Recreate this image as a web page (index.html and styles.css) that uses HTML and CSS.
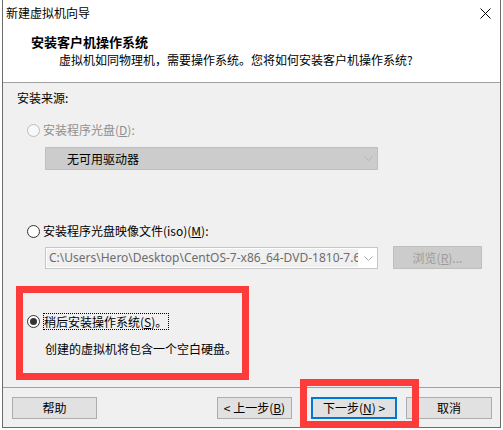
FILE: index.html
```html
<!DOCTYPE html>
<html lang="zh-CN">
<head>
<meta charset="utf-8">
<title>新建虚拟机向导</title>
<link rel="stylesheet" href="styles.css">
</head>
<body>
<div class="window">
  <div class="header">
    <div class="titlebar">
      <span class="title">新建虚拟机向导</span>
      <svg class="close" width="11" height="11" viewBox="0 0 11 11"><path d="M0.5 0.5 L10.5 10.5 M10.5 0.5 L0.5 10.5" stroke="#000" stroke-width="1" fill="none"/></svg>
    </div>
    <div class="heading">安装客户机操作系统</div>
    <div class="subtitle">虚拟机如同物理机，需要操作系统。您将如何安装客户机操作系统?</div>
  </div>
  <div class="content">
    <div class="source">安装来源:</div>
    <div class="radio-row row-disc">
      <span class="radio disabled"></span>
      <span class="label disabled-text">安装程序光盘(<u>D</u>):</span>
    </div>
    <div class="combo combo-disabled">
      <span>无可用驱动器</span>
      <svg class="arrow" width="9" height="5" viewBox="0 0 9 5"><polyline points="0.5,0.5 4.5,4.5 8.5,0.5" stroke="#b4b4b4" fill="none"/></svg>
    </div>
    <div class="radio-row row-iso">
      <span class="radio"></span>
      <span class="label">安装程序光盘映像文件(iso)(<u>M</u>):</span>
    </div>
    <div class="iso-row">
      <div class="combo combo-path">
        <span class="path">C:\Users\Hero\Desktop\CentOS-7-x86_64-DVD-1810-7.6</span>
        <svg class="arrow" width="9" height="5" viewBox="0 0 9 5"><polyline points="0.5,0.5 4.5,4.5 8.5,0.5" stroke="#a8a8a8" fill="none"/></svg>
      </div>
      <div class="btn btn-disabled">浏览(<u>R</u>)...</div>
    </div>
    <div class="radio-row row-later">
      <span class="radio checked"></span>
      <span class="label focus">稍后安装操作系统(<u>S</u>)。</span>
    </div>
    <div class="desc">创建的虚拟机将包含一个空白硬盘。</div>
  </div>
  <div class="footer">
    <div class="btn btn-help">帮助</div>
    <div class="spacer"></div>
    <div class="btn btn-back">&lt; 上一步(<u>B</u>)</div>
    <div class="btn btn-next">下一步(<u>N</u>) &gt;</div>
    <div class="btn btn-cancel">取消</div>
  </div>
  <div class="annot annot-option"></div>
  <div class="annot annot-next"></div>
</div>
</body>
</html>
```
FILE: styles.css
```css
* { box-sizing: border-box; }
html, body { margin: 0; padding: 0; background: #fff; }
body {
  font-family: "Noto Sans CJK SC", "Noto Sans", sans-serif;
  font-size: 12px;
  color: #000;
}
u { text-decoration: underline; text-underline-offset: 1px; }

.window {
  position: relative;
  margin-left: 2px;
  width: 499px;
  height: 428px;
  border-left: 1px solid #6b6b6b;
  border-right: 1px solid #6b6b6b;
  border-bottom: 1px solid #6b6b6b;
  display: flex;
  flex-direction: column;
}

.header {
  background: #fff;
  height: 83px;
  border-bottom: 1px solid #a0a0a0;
}
.titlebar {
  height: 26px;
  display: flex;
  align-items: center;
  justify-content: space-between;
  padding-left: 3px;
  padding-right: 9px;
}
.title { line-height: 16px; }
.close { display: block; }
.heading {
  margin-top: 8px;
  padding-left: 28px;
  font-size: 13px;
  font-weight: bold;
  line-height: 16px;
}
.subtitle {
  margin-top: 2px;
  padding-left: 56px;
  line-height: 16px;
}

.content {
  background: #f0f0f0;
  height: 305px;
  border-bottom: 1px solid #a0a0a0;
  overflow: hidden;
}
.source {
  margin-top: 7px;
  margin-left: 14px;
  line-height: 16px;
}
.radio-row {
  display: flex;
  align-items: center;
  padding-left: 24px;
  height: 16px;
}
.row-disc { margin-top: 16px; }
.row-iso { margin-top: 53px; }
.row-later { margin-top: 44px; height: 17px; }
.radio {
  width: 13px;
  height: 13px;
  border-radius: 50%;
  border: 1px solid #333;
  background: #fff;
  margin-right: 3px;
  display: flex;
  align-items: center;
  justify-content: center;
  flex: none;
}
.radio.disabled { border-color: #bcbcbc; background: #f8f8f8; }
.radio.checked::after {
  content: "";
  width: 7px;
  height: 7px;
  border-radius: 50%;
  background: #333;
}
.label { line-height: 16px; white-space: nowrap; }
.disabled-text { color: #8f8f8f; }
.focus {
  border: 1px dotted #000;
  line-height: 15px;
  padding: 0 1px 0 0;
}

.combo {
  display: flex;
  align-items: center;
  justify-content: space-between;
  width: 333px;
  margin-left: 42px;
}
.combo-disabled {
  margin-top: 9px;
  height: 23px;
  background: #cccccc;
  border: 1px solid #bfbfbf;
  padding-left: 21px;
  padding-right: 4px;
  line-height: 16px;
}
.arrow { display: block; flex: none; }

.iso-row {
  margin-top: 7px;
  display: flex;
  align-items: flex-end;
  height: 23px;
}
.combo-path {
  height: 22px;
  background: #fff;
  border: 1px solid #c6c6c6;
  padding: 1px 4px 1px 1px;
}
.path {
  width: 311px;
  height: 18px;
  background: #f0f0f0;
  color: #6d6d6d;
  font-family: "Noto Sans", "Noto Sans CJK SC", sans-serif;
  font-size: 12px;
  line-height: 18px;
  padding-left: 2px;
  white-space: nowrap;
  overflow: hidden;
}

.btn {
  height: 22px;
  background: #e1e1e1;
  border: 1px solid #adadad;
  text-align: center;
  line-height: 20px;
  white-space: nowrap;
  flex: none;
}
.btn-disabled {
  margin-left: 15px;
  width: 89px;
  height: 23px;
  line-height: 21px;
  background: #cccccc;
  border-color: #bfbfbf;
  color: #9c9c9c;
}

.desc {
  margin-top: 11px;
  margin-left: 42px;
  line-height: 16px;
}

.footer {
  height: 39px;
  padding-top: 9px;
  display: flex;
  align-items: flex-start;
  background: #f0f0f0;
}
.spacer { flex: 1; }
.btn-help { margin-left: 9px; width: 85px; }
.btn-back { width: 75px; margin-right: 19px; }
.btn-next {
  width: 86px;
  margin-right: 9px;
  border: 2px solid #0078d7;
  line-height: 18px;
}
.btn-cancel { width: 86px; margin-right: 8px; }

.annot {
  position: absolute;
  border: 7px solid #fd3b3b;
}
.annot-option { left: 13px; top: 286px; width: 233px; height: 94px; }
.annot-next { left: 297px; top: 379px; width: 119px; height: 49px; }
```
